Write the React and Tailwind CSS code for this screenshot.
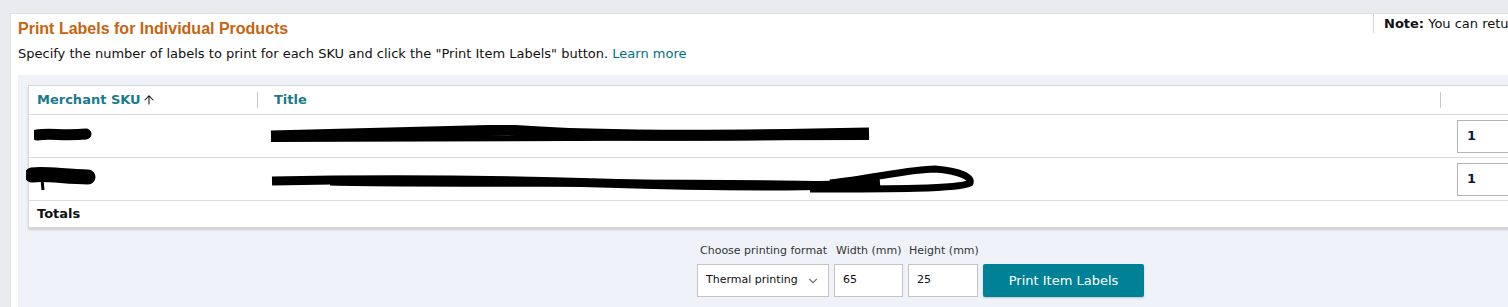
import React from "react";
import { ChevronDown, ArrowUp } from "lucide-react";

const font = { fontFamily: '"DejaVu Sans", Verdana, sans-serif' };

const rows = [
  {
    id: 1,
    sku: (
      <svg width="60" height="20" viewBox="0 0 60 20">
        <path d="M3 9 C15 7, 30 10, 52 8" stroke="#000" strokeWidth="11" strokeLinecap="round" fill="none" />
      </svg>
    ),
    title: (
      <svg width="610" height="22" viewBox="0 0 610 22">
        <path d="M2 11 C80 9, 180 6, 240 5 C300 10, 420 12, 600 8" stroke="#000" strokeWidth="11" fill="none" />
        <path d="M2 14 L600 12" stroke="#000" strokeWidth="6" fill="none" />
      </svg>
    ),
  },
  {
    id: 2,
    sku: (
      <svg width="72" height="28" viewBox="0 0 72 28">
        <path d="M6 10 C20 8, 40 12, 62 12" stroke="#000" strokeWidth="15" strokeLinecap="round" fill="none" />
        <path d="M16 14 L17 25" stroke="#000" strokeWidth="3" fill="none" />
      </svg>
    ),
    title: (
      <svg width="710" height="32" viewBox="0 0 710 32">
        <path d="M2 18 C100 16, 200 16, 330 20 C450 24, 560 24, 610 20" stroke="#000" strokeWidth="9" fill="none" />
        <path d="M560 20 C600 16, 640 6, 665 6 C690 8, 702 14, 700 20 C690 26, 620 26, 540 26" stroke="#000" strokeWidth="7" fill="none" />
        <path d="M60 19 C200 22, 400 18, 560 22" stroke="#000" strokeWidth="7" fill="none" />
      </svg>
    ),
  },
];

export default function App() {
  return (
    <div
      className="w-full h-[307px] overflow-hidden bg-[#e9ebee] pt-[13px] pl-[10px] text-[#0f1111]"
      style={font}
    >
      <div className="bg-white border-l border-t border-[#dde0e4] h-full">
        <div className="flex">
          <div className="flex-1 pl-[7px] pt-[5px]">
            <h1
              className="text-[16px] leading-[20px] font-bold text-[#c7640f]"
              style={{ fontFamily: '"Liberation Sans", Arial, sans-serif' }}
            >
              Print Labels for Individual Products
            </h1>
            <p className="text-[13px] leading-[18px] mt-[6px] text-[#111]">
              Specify the number of labels to print for each SKU and click the
              "Print Item Labels" button.{" "}
              <span className="text-[#007185]">Learn more</span>
            </p>
          </div>
          <div className="w-[135px] shrink-0 border-l border-[#d5d9d9] h-[19px] pl-[10px] text-[13px] leading-[20px] whitespace-nowrap overflow-hidden">
            <span className="font-bold">Note:</span> You can retu
          </div>
        </div>

        <div className="ml-[7px] mt-[12px] bg-[#eff3f9] pt-[10px] pl-[10px] h-[240px]">
          <div className="w-[1520px] bg-white border border-[#d5d9d9] shadow-[0_2px_2px_rgba(0,0,0,0.15)] text-[13px]">
            <div className="flex h-[29px] items-center border-b border-[#dcdcdc] font-bold text-[#1b7a8b]">
              <div className="w-[228px] pl-[8px] flex items-center gap-[1px]">
                Merchant SKU
                <ArrowUp size={14} strokeWidth={1.75} className="text-[#111]" />
              </div>
              <div className="flex-1 border-l border-[#c8c8c8] h-[16px] pl-[16px] leading-[16px]">
                Title
              </div>
              <div className="w-[107px] border-l border-[#c8c8c8] h-[16px]" />
            </div>
            {rows.map((r) => (
              <div key={r.id} className="flex h-[43px] items-center border-b border-[#dcdcdc]">
                <div className={r.id === 1 ? "w-[228px] pl-[5px]" : "w-[228px] -ml-[3px]"}>
                  {r.sku}
                </div>
                <div className={r.id === 1 ? "flex-1 pl-[12px]" : "flex-1 pl-[16px]"}>{r.title}</div>
                <div className="w-[107px] pl-[17px]">
                  <div className="h-[33px] border border-[#b4b4b4] bg-white pl-[9px] flex items-center font-bold text-[#0f1a3a]">
                    1
                  </div>
                </div>
              </div>
            ))}
            <div className="h-[26px] flex items-center pl-[8px] font-bold text-[#0f1111]">
              Totals
            </div>
          </div>

          <div className="pl-[669px] pt-[15px]">
            <div className="flex text-[11px] leading-[16px] text-[#333] h-[20px]">
              <span className="w-[137px] pl-[3px]">Choose printing format</span>
              <span className="w-[74px] pl-[2px]">Width (mm)</span>
              <span className="pl-[1px]">Height (mm)</span>
            </div>
            <div className="flex gap-[5px] mt-[1px] text-[11px]">
              <div className="w-[132px] h-[33px] border border-[#c4c4c4] bg-white flex items-center justify-between pl-[8px] pr-[8px]">
                <span>Thermal printing</span>
                <ChevronDown size={14} className="text-[#777]" />
              </div>
              <div className="w-[69px] h-[33px] border border-[#c4c4c4] bg-white flex items-center pl-[8px]">
                65
              </div>
              <div className="w-[70px] h-[33px] border border-[#c4c4c4] bg-white flex items-center pl-[8px]">
                25
              </div>
              <button className="w-[161px] h-[33px] bg-[#008296] text-white text-[13px] rounded-[2px] shadow-[0_1px_2px_rgba(0,0,0,0.2)]">
                Print Item Labels
              </button>
            </div>
          </div>
        </div>
      </div>
    </div>
  );
}
